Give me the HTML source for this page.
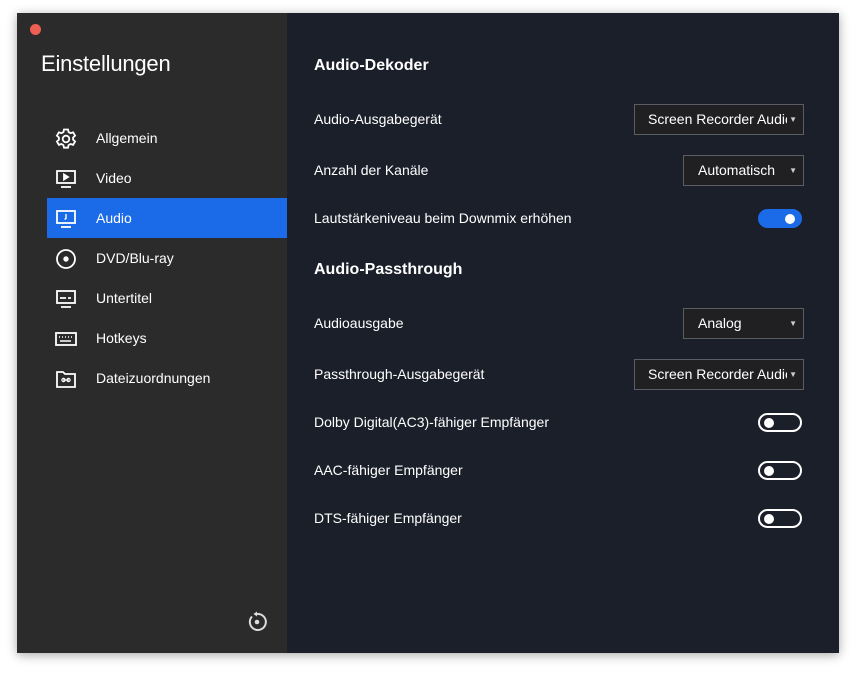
<!DOCTYPE html>
<html><head><meta charset="utf-8"><style>
*{margin:0;padding:0;box-sizing:border-box}
body{width:856px;height:674px;background:#fff;font-family:"Liberation Sans",Arial,sans-serif;position:relative;overflow:hidden}
.win{position:absolute;left:17px;top:13px;width:822px;height:640px;background:#1b1f2a;box-shadow:0 2px 10px rgba(0,0,0,.35)}
.side{position:absolute;left:0;top:0;width:270px;height:640px;background:#2b2b2b}
.dot{position:absolute;left:13px;top:11px;width:11px;height:11px;border-radius:50%;background:#ec5f52}
h1{position:absolute;left:24px;top:38px;font-size:22px;font-weight:normal;color:#fff;letter-spacing:-0.2px}
.item{position:absolute;left:30px;width:240px;height:40px;color:#fff;font-size:14px}
.item.sel{background:#1b6ae8}
.item span{position:absolute;left:49px;top:12px}
.item svg{position:absolute;left:7px;top:9px}
.t{position:absolute;color:#fff;font-size:14px}
.h{position:absolute;color:#fff;font-size:16px;font-weight:bold}
.sel2{position:absolute;border:1px solid #5a5d63;background:#202022;color:#fff;font-size:14px;height:31px;line-height:29px;overflow:hidden;white-space:nowrap}
.sel2 i{position:absolute;right:6px;top:0;font-style:normal;font-size:8px;color:#ccc}
.tg{position:absolute;left:741px;width:44px;height:19px;border:2px solid #fff;border-radius:10px}
.tg:after{content:"";position:absolute;left:4px;top:3px;width:10px;height:10px;border-radius:50%;background:#fff}
.tg.on{background:#1b6ae8;border-color:#1b6ae8}
.tg.on:after{left:auto;right:5px}
</style></head><body>
<div class="win">
<div class="side">
<div class="dot"></div>
<h1>Einstellungen</h1>
<div class="item" style="top:105px"><svg width="24" height="24" viewBox="0 0 24 24" fill="none" stroke="#fff" stroke-width="1.8"><circle cx="12" cy="12" r="3.3"/><path d="M10 2.5h4l.6 2.6 2 1.1 2.5-.9 2 3.4-2 1.8v2.2l2 1.8-2 3.4-2.5-.9-2 1.1-.6 2.6h-4l-.6-2.6-2-1.1-2.5.9-2-3.4 2-1.8v-2.2l-2-1.8 2-3.4 2.5.9 2-1.1z"/></svg><span>Allgemein</span></div>
<div class="item" style="top:145px"><svg width="24" height="24" viewBox="0 0 24 24" fill="none" stroke="#fff" stroke-width="1.8"><rect x="3" y="4" width="18" height="12"/><path d="M7 20h10"/><path d="M10 7.5v5l4-2.5z" fill="#fff"/></svg><span>Video</span></div>
<div class="item sel" style="top:185px"><svg width="24" height="24" viewBox="0 0 24 24" fill="none" stroke="#fff" stroke-width="1.8"><rect x="3" y="4" width="18" height="12"/><path d="M7 20h10"/><path d="M12 7v5M12 12l-1.5 0" stroke-width="1.4"/></svg><span>Audio</span></div>
<div class="item" style="top:225px"><svg width="24" height="24" viewBox="0 0 24 24" fill="none" stroke="#fff" stroke-width="1.8"><circle cx="12" cy="12" r="9"/><circle cx="12" cy="12" r="1.8" fill="#fff"/></svg><span>DVD/Blu-ray</span></div>
<div class="item" style="top:265px"><svg width="24" height="24" viewBox="0 0 24 24" fill="none" stroke="#fff" stroke-width="1.8"><rect x="3" y="4" width="18" height="12"/><path d="M7 20h10M6 11h6M14 11h3"/></svg><span>Untertitel</span></div>
<div class="item" style="top:305px"><svg width="24" height="24" viewBox="0 0 24 24" fill="none" stroke="#fff" stroke-width="1.8"><rect x="2" y="6" width="20" height="12"/><path d="M5 10h1M8 10h1M11 10h1M14 10h1M17 10h1M6 14h11" stroke-width="1.5"/></svg><span>Hotkeys</span></div>
<div class="item" style="top:345px"><svg width="24" height="24" viewBox="0 0 24 24" fill="none" stroke="#fff" stroke-width="1.8"><path d="M3 5h6l2 2h10v13H3z"/><path d="M9 13h6" stroke-width="1.2"/><circle cx="9.5" cy="13" r="1.6" stroke-width="1.2"/><circle cx="14.5" cy="13" r="1.6" stroke-width="1.2"/></svg><span>Dateizuordnungen</span></div>
<svg style="position:absolute;left:229px;top:598px" width="22" height="22" viewBox="0 0 22 22" fill="none" stroke="#ddd" stroke-width="2"><path d="M6 5.5A8 8 0 1 0 11 3"/><path d="M11 0.5v5l-3.5-2.5z" fill="#ddd" stroke="none"/><circle cx="11" cy="11" r="2.3" fill="#ddd" stroke="none"/></svg>
</div>
<div class="h" style="left:297px;top:44px">Audio-Dekoder</div>
<div class="t" style="left:297px;top:98px">Audio-Ausgabegerät</div>
<div class="sel2" style="left:617px;top:91px;width:170px;padding-left:13px">Screen Recorder Audio<i style="background:#202022;padding-left:2px">▼</i></div>
<div class="t" style="left:297px;top:149px">Anzahl der Kanäle</div>
<div class="sel2" style="left:666px;top:142px;width:121px;padding-left:14px">Automatisch<i>▼</i></div>
<div class="t" style="left:297px;top:197px">Lautstärkeniveau beim Downmix erhöhen</div>
<div class="tg on" style="top:196px"></div>
<div class="h" style="left:297px;top:248px">Audio-Passthrough</div>
<div class="t" style="left:297px;top:302px">Audioausgabe</div>
<div class="sel2" style="left:666px;top:295px;width:121px;padding-left:14px">Analog<i>▼</i></div>
<div class="t" style="left:297px;top:353px">Passthrough-Ausgabegerät</div>
<div class="sel2" style="left:617px;top:346px;width:170px;padding-left:13px">Screen Recorder Audio<i style="background:#202022;padding-left:2px">▼</i></div>
<div class="t" style="left:297px;top:401px">Dolby Digital(AC3)-fähiger Empfänger</div>
<div class="tg" style="top:400px"></div>
<div class="t" style="left:297px;top:449px">AAC-fähiger Empfänger</div>
<div class="tg" style="top:448px"></div>
<div class="t" style="left:297px;top:497px">DTS-fähiger Empfänger</div>
<div class="tg" style="top:496px"></div>
</div>
</body></html>
